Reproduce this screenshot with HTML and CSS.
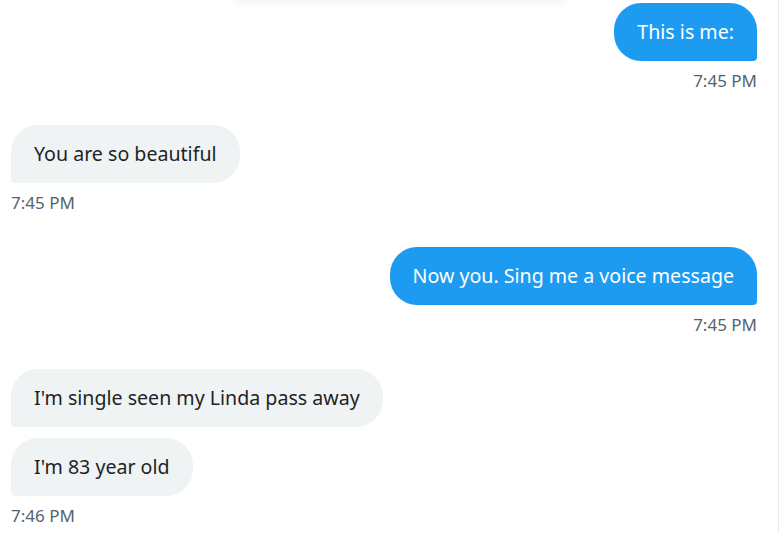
FILE: index.html
```html
<!DOCTYPE html>
<html lang="en">
<head>
    <meta charset="UTF-8">
    <title>Messages</title>
    <link rel="stylesheet" href="styles.css">
</head>
<body>
    <div class="top-shadow"></div>
    <div class="thread">
        <div class="group sent">
            <div class="bubble">This is me:</div>
            <div class="time">7:45 PM</div>
        </div>
        <div class="group received">
            <div class="bubble">You are so beautiful</div>
            <div class="time">7:45 PM</div>
        </div>
        <div class="group sent">
            <div class="bubble">Now you. Sing me a voice message</div>
            <div class="time">7:45 PM</div>
        </div>
        <div class="group received">
            <div class="bubble">I'm single seen my Linda pass away</div>
            <div class="bubble">I'm 83 year old</div>
            <div class="time">7:46 PM</div>
        </div>
    </div>
</body>
</html>
```

FILE: styles.css
```css
body {
    margin: 0;
    background: #fff;
    font-family: "Noto Sans", "Open Sans", sans-serif;
    overflow: hidden;
}

.top-shadow {
    position: absolute;
    top: -12px;
    left: 235px;
    width: 330px;
    height: 12px;
    box-shadow: 0 2px 8px rgba(0, 0, 0, 0.07);
}

.thread {
    padding: 3px 21px 0 11px;
    border-right: 1px solid #e6e9eb;
    margin-right: 2px;
    min-height: 530px;
}

.group {
    display: flex;
    flex-direction: column;
    gap: 11px;
    margin-bottom: 33px;
}

.sent {
    align-items: flex-end;
}

.received {
    align-items: flex-start;
}

.bubble {
    padding: 15px 23px 16px;
    font-size: 19.6px;
    line-height: 27px;
    border-radius: 27px;
}

.sent .bubble {
    background: #1d9bf0;
    color: #fff;
    border-bottom-right-radius: 4px;
}

.received .bubble {
    background: #eff3f4;
    color: #1f2326;
    border-bottom-left-radius: 4px;
}

.time {
    margin-top: -2px;
    font-size: 17px;
    line-height: 22px;
    color: #536471;
}
```
